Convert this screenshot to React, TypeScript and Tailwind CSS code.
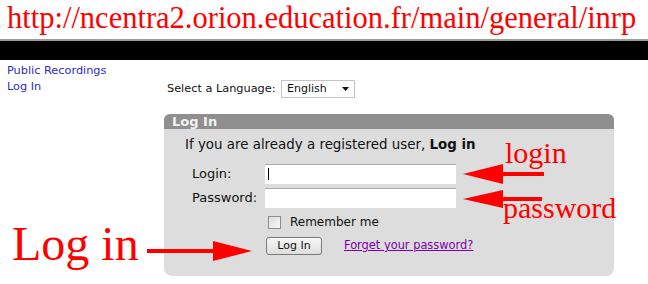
import React from "react";

const ui = "font-['DejaVu_Sans',Verdana,sans-serif]";
const serif = "font-['Liberation_Serif','Times_New_Roman',serif]";

function Field({ label, caret }: { label: string; caret?: boolean }) {
  return (
    <div className="flex items-center h-[20px]">
      <span className="w-[73px] text-[13px] leading-[18px] text-[#111]">{label}</span>
      <div className="relative w-[191px] h-[20px] bg-white border-t border-[#a9a9a9]">
        {caret && <span className="absolute left-[3px] top-[3px] w-px h-[12px] bg-black" />}
      </div>
    </div>
  );
}

export default function App() {
  return (
    <div className="relative w-[648px] h-[284px] overflow-hidden bg-white">
      <div className={`h-[39px] pl-[7px] pt-[3px] text-[30.5px] leading-none text-[#ff0000] ${serif}`}>
        http://ncentra2.orion.education.fr/main/general/inrp
      </div>
      <div className="h-[2px] bg-[#9c9c9c]" />
      <div className="h-[19px] bg-black" />

      <div className={`flex ${ui}`}>
        <div className="w-[164px] pl-[7px] pt-[3px] flex flex-col text-[11.3px] leading-[16px] text-[#2b2bc0]">
          <a>Public Recordings</a>
          <a>Log In</a>
        </div>

        <div className="flex flex-col">
          <div className="flex items-center mt-[20px] pl-[3px] h-[18px]">
            <span className="text-[11.3px] text-[#111] w-[114px]">Select a Language:</span>
            <div className="flex items-center justify-between w-[74px] h-[18px] pl-[5px] pr-[5px] bg-white border border-[#c4c4c4] text-[11px] text-[#111]">
              <span>English</span>
              <svg width="7" height="4" viewBox="0 0 7 4"><path d="M0 0h7L3.5 4z" fill="#111" /></svg>
            </div>
          </div>

          <div className="mt-[16px] w-[450px] rounded-t-[6px] rounded-b-[8px] bg-[#dddddd] overflow-hidden">
            <div className="h-[15px] bg-[#8f8f8f] pl-[8px] text-[13px] leading-[15px] font-bold text-[#f2f2f2]">Log In</div>
            <div className="pl-[28px] pt-[7px] pb-[21px]">
              <div className="-ml-[7px] text-[13.4px] leading-[18px] text-[#111]">
                If you are already a registered user, <b>Log in</b>
              </div>
              <div className="mt-[10px] flex flex-col gap-[4px]">
                <Field label="Login:" caret />
                <Field label="Password:" />
              </div>
              <div className="mt-[8px] ml-[76px] flex items-center h-[13px]">
                <span className="w-[13px] h-[13px] border border-[#8d8d8d] bg-gradient-to-br from-[#dcdcdc] to-[#f8f8f8]" />
                <span className="ml-[9px] text-[12px] leading-[13px] text-[#111]">Remember me</span>
              </div>
              <div className="mt-[8px] ml-[74px] flex items-center">
                <button className="w-[56px] h-[18px] rounded-[3px] border border-[#7a7a7a] bg-gradient-to-b from-[#f6f6f6] to-[#dedede] text-[11px] leading-[16px] text-[#111]">
                  Log In
                </button>
                <a className="ml-[22px] text-[11.4px] text-[#7a00a8] underline">Forget your password?</a>
              </div>
            </div>
          </div>
        </div>
      </div>

      {/* red annotations over the page */}
      <div className={`absolute left-[505px] top-[138px] text-[30px] leading-none text-[#ff0000] ${serif}`}>login</div>
      <div className={`absolute left-[503px] top-[193px] text-[30px] leading-none text-[#ff0000] ${serif}`}>password</div>
      <div className={`absolute left-[12px] top-[220px] text-[48px] leading-none text-[#ff0000] ${serif}`}>Log in</div>
      <svg className="absolute left-0 top-0 pointer-events-none" width="648" height="284">
        <g fill="#ff0000">
          <rect x="500" y="172" width="44" height="4" />
          <polygon points="463,174 503,164 503,184" />
          <rect x="500" y="197" width="42" height="4" />
          <polygon points="463,199 503,190 503,208" />
          <rect x="147" y="249" width="68" height="4" />
          <polygon points="213,241 213,261 252,251" />
        </g>
      </svg>
    </div>
  );
}
